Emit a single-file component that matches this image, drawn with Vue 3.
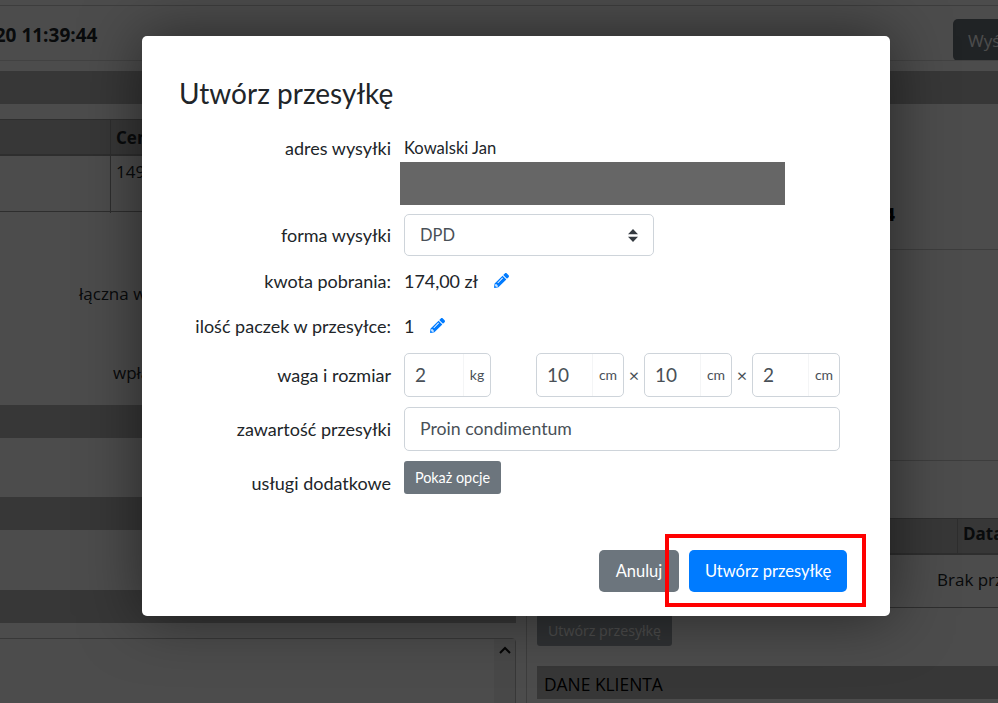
<script setup>
const pencil = 'M497.9 142.1l-46.1 46.1c-4.7 4.7-12.3 4.7-17 0l-111-111c-4.7-4.7-4.7-12.3 0-17l46.1-46.1c18.7-18.7 49.1-18.7 67.9 0l60.1 60.1c18.8 18.7 18.8 49.1 0 67.9zM284.2 99.8L21.6 362.4.4 483.9c-2.9 16.4 11.4 30.6 27.8 27.8l121.5-21.3 262.6-262.6c4.7-4.7 4.7-12.3 0-17l-111-111c-4.8-4.7-12.4-4.7-17.1 0zM124.1 339.9c-5.5-5.5-5.5-14.3 0-19.8l154-154c5.5-5.5 14.3-5.5 19.8 0s5.5 14.3 0 19.8l-154 154c-5.5 5.5-14.3 5.5-19.8 0zM88 424h48v36.3l-64.5 11.3-31.1-31.1L51.7 376H88v48z'
const sizes = [
  { value: '10', unit: 'cm' },
  { value: '10', unit: 'cm' },
  { value: '2', unit: 'cm' }
]
</script>

<template>
  <div class="page">
    <header class="top">
      <div class="date">2020 11:39:44</div>
      <button class="send">Wyślij</button>
    </header>
    <div class="bar wide"></div>
    <div class="cols">
      <section class="left">
        <div class="table">
          <div class="th first"></div>
          <div class="th">Cena</div>
          <div class="td first"></div>
          <div class="td">149</div>
        </div>
        <div class="sum sum-a">łączna wartość</div>
        <div class="sum sum-b">wpłacono</div>
        <div class="bar bar-a"></div>
        <div class="bar bar-b"></div>
        <div class="bar bar-c"></div>
        <div class="box">
          <div class="scroll">
            <svg width="12" height="8" viewBox="0 0 12 8"><path d="M1 7l5-5 5 5" fill="none" stroke="#111" stroke-width="2"/></svg>
          </div>
        </div>
      </section>
      <section class="right">
        <div class="block block-a"><b>4</b></div>
        <div class="block block-b"></div>
        <div class="table2">
          <div class="th2"></div>
          <div class="th2 data">Data</div>
          <div class="td2">Brak przesyłek</div>
        </div>
        <button class="disabled">Utwórz przesyłkę</button>
        <div class="bar client">DANE KLIENTA</div>
      </section>
    </div>

    <div class="overlay">
      <div class="modal">
        <h2 class="title">Utwórz przesyłkę</h2>
        <div class="form">
          <div class="row">
            <label class="lab">adres wysyłki</label>
            <div class="val">
              <div class="name">Kowalski Jan</div>
              <div class="redacted"></div>
            </div>
          </div>
          <div class="row g9">
            <label class="lab">forma wysyłki</label>
            <div class="select">
              <span>DPD</span>
              <svg width="10" height="13" viewBox="0 0 4 5" preserveAspectRatio="none"><path d="M2 0L0 2h4zm0 5L0 3h4z" fill="#343a40"/></svg>
            </div>
          </div>
          <div class="row g13 plain">
            <label class="lab">kwota pobrania:</label>
            <div class="val inline">
              <span>174,00 zł</span>
              <svg class="pen" viewBox="0 0 512 512"><path :d="pencil" fill="#007bff"/></svg>
            </div>
          </div>
          <div class="row g21 plain">
            <label class="lab">ilość paczek w przesyłce:</label>
            <div class="val inline">
              <span>1</span>
              <svg class="pen" viewBox="0 0 512 512"><path :d="pencil" fill="#007bff"/></svg>
            </div>
          </div>
          <div class="row g15">
            <label class="lab">waga i rozmiar</label>
            <div class="sizes">
              <div class="group weight">
                <span class="gv">2</span><span class="unit">kg</span>
              </div>
              <template v-for="(s, i) in sizes" :key="i">
                <span v-if="i" class="times">×</span>
                <div class="group">
                  <span class="gv">{{ s.value }}</span><span class="unit">{{ s.unit }}</span>
                </div>
              </template>
            </div>
          </div>
          <div class="row g10">
            <label class="lab">zawartość przesyłki</label>
            <div class="text">Proin condimentum</div>
          </div>
          <div class="row g10 top-row">
            <label class="lab low">usługi dodatkowe</label>
            <button class="small">Pokaż opcje</button>
          </div>
        </div>
        <div class="foot">
          <button class="btn gray">Anuluj</button>
          <button class="btn blue">Utwórz przesyłkę</button>
        </div>
        <div class="mark"></div>
      </div>
    </div>
  </div>
</template>

<style>
html, body { margin: 0; overflow: hidden; }
</style>

<style scoped>
.page {
  position: relative;
  height: 703px;
  overflow: hidden;
  background: #fff;
  font-family: "Open Sans", "Noto Sans", sans-serif;
  font-size: 17px;
  line-height: 24px;
  color: #212529;
}
button { font-family: inherit; border: 0; }
.top {
  margin-top: 5px;
  border-top: 1px solid #ccc;
  border-bottom: 1px solid #ddd;
  height: 54px;
  box-sizing: content-box;
  display: flex;
  justify-content: space-between;
  overflow: hidden;
}
.date {
  margin-left: -27px;
  margin-top: 17px;
  font-size: 19px;
  font-weight: 700;
  white-space: nowrap;
  height: 24px;
}
.send {
  flex: none;
  margin-top: 13px;
  margin-right: -35px;
  width: 80px;
  height: 42px;
  background: #6c757d;
  color: #fff;
  border-radius: 5px;
  font-size: 17px;
  text-align: left;
  padding: 0 15px;
}
.bar { background: #b9b9b9; height: 33px; }
.wide { margin-top: 10px; }
.cols {
  display: grid;
  grid-template-columns: 516px 1fr;
  column-gap: 10px;
  height: 599px;
}
.left { min-width: 0; }
.table {
  margin-top: 15px;
  display: grid;
  grid-template-columns: 111px 1fr;
  grid-template-rows: 36px 57px;
  border-top: 1px solid #999;
  border-bottom: 1px solid #999;
  box-sizing: border-box;
  height: 93px;
}
.th { background: #b9b9b9; border-bottom: 2px solid #999; font-weight: 700; padding: 6px 5px 0; }
.td { padding: 4px 5px; }
.first { border-right: 1px solid #999; }
.sum { white-space: nowrap; }
.sum-a { margin-top: 70px; padding-left: 79px; }
.sum-b { margin-top: 55px; padding-left: 113px; }
.bar-a { margin-top: 20px; }
.bar-b { margin-top: 59px; }
.bar-c { margin-top: 60px; }
.box {
  margin: 15px 0 0 -5px;
  height: 90px;
  border: 1px solid #bbb;
  border-radius: 4px;
  display: flex;
  justify-content: flex-end;
}
.scroll {
  width: 21px;
  background: #f1f1f1;
  display: flex;
  justify-content: center;
  padding-top: 7px;
  box-sizing: border-box;
}
.scroll svg { display: block; }
.right {
  border-left: 1px solid #ccc;
  padding-left: 10px;
  min-width: 0;
  overflow: hidden;
}
.block { border-bottom: 1px solid #ccc; margin-right: 0; }
.block-a { height: 146px; padding: 99px 103px 0 0; box-sizing: border-box; text-align: right; font-weight: 700; color: #000; }
.block-b { height: 210px; }
.table2 {
  margin-top: 57px;
  display: grid;
  grid-template-columns: 420px 1fr;
  grid-template-rows: 36px 54px;
  border-top: 1px solid #999;
  border-bottom: 1px solid #999;
  height: 90px;
  box-sizing: border-box;
}
.th2 { background: #b9b9b9; border-bottom: 2px solid #999; }
.data { border-left: 1px solid #999; font-weight: 700; padding: 3px 5px; overflow: hidden; }
.td2 { grid-column: 1 / 3; padding: 13px 0 0 400px; white-space: nowrap; }
.disabled {
  display: block;
  margin-top: 6px;
  width: 135px;
  height: 32px;
  padding: 0;
  background: #6c757d;
  color: #fff;
  opacity: .65;
  border-radius: 3px;
  font-size: 14.2px;
  white-space: nowrap;
}
.client { margin-top: 20px; padding: 6px 7px 0; box-sizing: border-box; color: #000; font-size: 17.4px; }

.overlay {
  position: absolute;
  inset: 0;
  background: rgba(0, 0, 0, .7);
  display: flex;
  align-items: flex-start;
}
.modal {
  position: relative;
  margin: 36px 0 0 142px;
  width: 748px;
  height: 580px;
  box-sizing: border-box;
  padding: 40px 43px 24px 37px;
  background: #fff;
  border-radius: 5px;
  box-shadow: 0 0 60px rgba(0, 0, 0, .5);
  font-family: Lato, "Noto Sans", sans-serif;
  color: #212529;
}
.title { margin: 0; font-size: 28px; line-height: 34px; font-weight: 400; }
.form { margin: 29px 7px 0 1px; }
.row { display: flex; align-items: center; }
.row.top-row { align-items: flex-start; }
.g9 { margin-top: 9px; }
.g10 { margin-top: 10px; }
.g13 { margin-top: 13px; }
.g15 { margin-top: 15px; }
.g21 { margin-top: 21px; }
.lab { flex: none; width: 211px; margin-right: 13px; text-align: right; font-size: 18px; white-space: nowrap; }
.row:first-child { align-items: flex-start; }
.low { padding-top: 10px; }
.val { font-size: 17.9px; }
.name { font-size: 16.6px; line-height: 18px; padding-bottom: 2px; }
.row:first-child .lab { line-height: 18px; }
.redacted { width: 385px; height: 43px; margin: 3px 0 0 -4px; background: #666; }
.inline { display: flex; align-items: center; }
.pen { width: 15px; height: 15px; margin: -2px 0 0 16px; }
.select {
  width: 250px;
  height: 42px;
  box-sizing: border-box;
  border: 1px solid #ced4da;
  border-radius: 5px;
  display: flex;
  align-items: center;
  justify-content: space-between;
  padding: 0 15px;
  font-size: 16.5px;
  color: #495057;
}
.sizes { display: flex; align-items: center; }
.group {
  width: 88px;
  height: 44px;
  box-sizing: border-box;
  border: 1px solid #ced4da;
  border-radius: 5px;
  display: flex;
  align-items: center;
  color: #495057;
}
.weight { width: 87px; margin-right: 45px; }
.weight .unit { width: 27px; }
.gv { flex: 1; padding-left: 10px; font-size: 19px; }
.unit { width: 31px; height: 100%; box-sizing: border-box; border-left: 1px solid #f4f5f6; font-size: 14px; display: flex; align-items: center; justify-content: center; }
.times { width: 20px; text-align: center; color: #495057; font-size: 18px; }
.text {
  width: 436px;
  height: 44px;
  box-sizing: border-box;
  border: 1px solid #ced4da;
  border-radius: 5px;
  padding: 0 15px;
  display: flex;
  align-items: center;
  font-size: 17.7px;
  color: #495057;
}
.small {
  width: 97px;
  height: 33px;
  padding: 0;
  background: #6c757d;
  color: #fff;
  border-radius: 3px;
  font-family: inherit;
  font-size: 14.4px;
}
.foot { display: flex; justify-content: flex-end; gap: 10px; margin-top: 55px; }
.btn { height: 42px; border-radius: 5px; color: #fff; font-family: inherit; font-size: 16.5px; padding: 0; }
.gray { width: 80px; background: #6c757d; }
.blue { width: 158px; background: #007bff; }
.mark {
  position: absolute;
  left: 523px;
  top: 498px;
  width: 201px;
  height: 73px;
  box-sizing: border-box;
  border: 4px solid #f00;
}
</style>
